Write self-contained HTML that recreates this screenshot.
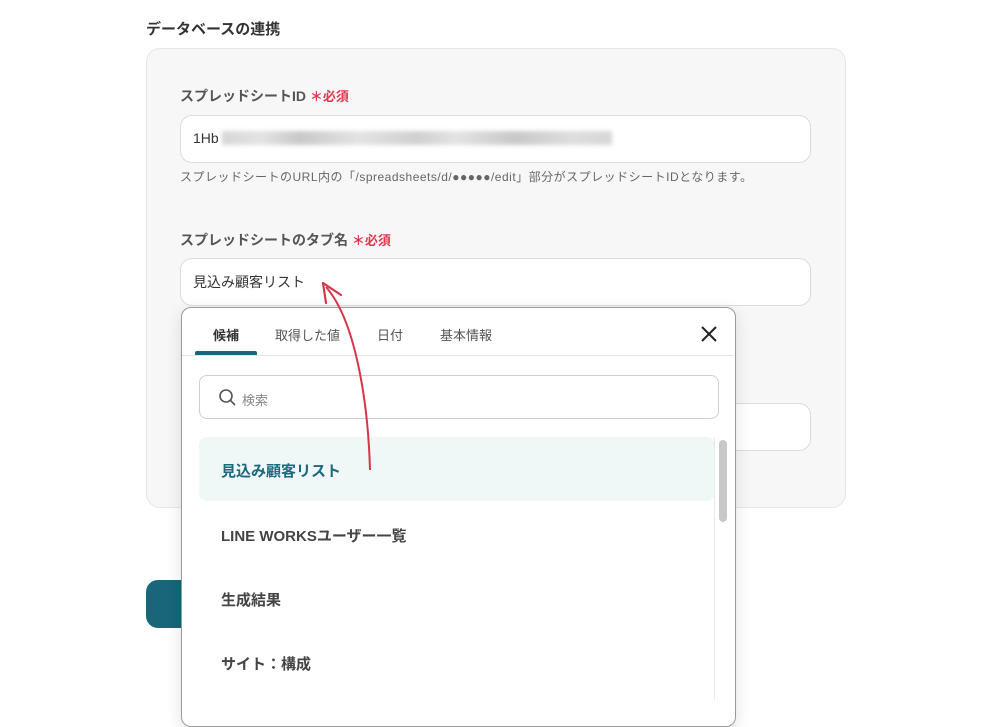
<!DOCTYPE html>
<html><head><meta charset="utf-8"><style>
*{box-sizing:border-box;margin:0;padding:0}
body{width:1000px;height:700px;background:#fff;position:relative;overflow:hidden;font-family:"Liberation Sans","Noto Sans CJK JP",sans-serif;color:#333}
.a{position:absolute}
.lbl{font-size:14px;font-weight:bold;color:#555}
.req{color:#e0364e;font-size:13px;font-weight:bold}
.inp{background:#fff;border:1px solid #dcdcdc;border-radius:12px}
.item{position:absolute;left:221px;font-size:15px;font-weight:bold;color:#444}
</style></head><body>
<div class="a" style="left:146px;top:18px;font-size:15px;font-weight:bold;color:#333">データベースの連携</div>
<div class="a" style="left:146px;top:48px;width:700px;height:460px;background:#f7f7f7;border:1px solid #e6e6e6;border-radius:14px"></div>
<div class="a lbl" style="left:180px;top:86px">スプレッドシートID <span class="req">＊必須</span></div>
<div class="a inp" style="left:180px;top:115px;width:631px;height:48px"></div>
<div class="a" style="left:193px;top:130px;font-size:14px;color:#333">1Hb</div>
<div class="a" style="left:222px;top:131px;width:390px;height:14px;background:linear-gradient(90deg,#ccc,#ddd 10%,#bbb 20%,#ddd 35%,#c4c4c4 50%,#ddd 60%,#bbb 75%,#d6d6d6 90%,#ccc);filter:blur(2px);opacity:.8"></div>
<div class="a" style="left:180px;top:168px;font-size:12px;letter-spacing:0.5px;color:#666;white-space:nowrap">スプレッドシートのURL内の「/spreadsheets/d/●●●●●/edit」部分がスプレッドシートIDとなります。</div>
<div class="a lbl" style="left:180px;top:230px">スプレッドシートのタブ名 <span class="req">＊必須</span></div>
<div class="a inp" style="left:180px;top:258px;width:631px;height:48px"></div>
<div class="a" style="left:193px;top:272px;font-size:14px;color:#333">見込み顧客リスト</div>
<div class="a inp" style="left:700px;top:403px;width:111px;height:48px"></div>
<div class="a" style="left:146px;top:580px;width:100px;height:48px;background:#17667a;border-radius:12px"></div>

<div class="a" style="left:181px;top:307px;width:555px;height:420px;background:#fff;border:1px solid #9a9a9a;border-radius:10px;box-shadow:0 4px 16px rgba(0,0,0,.12)"></div>
<div class="a" style="left:213px;top:325px;font-size:13px;font-weight:bold;color:#333">候補</div>
<div class="a" style="left:275px;top:325px;font-size:13px;color:#555">取得した値</div>
<div class="a" style="left:377px;top:325px;font-size:13px;color:#555">日付</div>
<div class="a" style="left:440px;top:325px;font-size:13px;color:#555">基本情報</div>
<div class="a" style="left:182px;top:355px;width:552px;height:1px;background:#e6e6e6"></div>
<div class="a" style="left:195px;top:351px;width:62px;height:4px;background:#17667a;border-radius:2px 2px 0 0"></div>
<svg class="a" style="left:700px;top:325px" width="18" height="18" viewBox="0 0 18 18"><path d="M2 2L16 16M16 2L2 16" stroke="#222" stroke-width="2"/></svg>
<div class="a" style="left:199px;top:375px;width:520px;height:44px;border:1px solid #cfcfcf;border-radius:8px"></div>
<svg class="a" style="left:218px;top:388px" width="20" height="20" viewBox="0 0 20 20"><circle cx="8" cy="8" r="6" fill="none" stroke="#555" stroke-width="1.6"/><path d="M12.5 12.5L17 17" stroke="#555" stroke-width="1.6"/></svg>
<div class="a" style="left:242px;top:390px;font-size:13px;color:#888">検索</div>
<div class="a" style="left:199px;top:437px;width:516px;height:64px;background:#eff7f7;border-radius:8px"></div>
<div class="item" style="top:460px;color:#1b6a80">見込み顧客リスト</div>
<div class="item" style="top:525px">LINE WORKSユーザー一覧</div>
<div class="item" style="top:589px">生成結果</div>
<div class="item" style="top:653px">サイト：構成</div>
<div class="a" style="left:714px;top:437px;width:1px;height:263px;background:#e8e8e8"></div>
<div class="a" style="left:719px;top:440px;width:8px;height:82px;background:#c8c8c8;border-radius:4px"></div>

<svg class="a" style="left:0;top:0" width="1000" height="700" viewBox="0 0 1000 700">
<path d="M370 470 C368 400 355 320 326 287" fill="none" stroke="#d7354a" stroke-width="2"/>
<path d="M323 283 L326 303 M323 283 L341 295" fill="none" stroke="#d7354a" stroke-width="2.2" stroke-linecap="round"/>
</svg>
</body></html>
